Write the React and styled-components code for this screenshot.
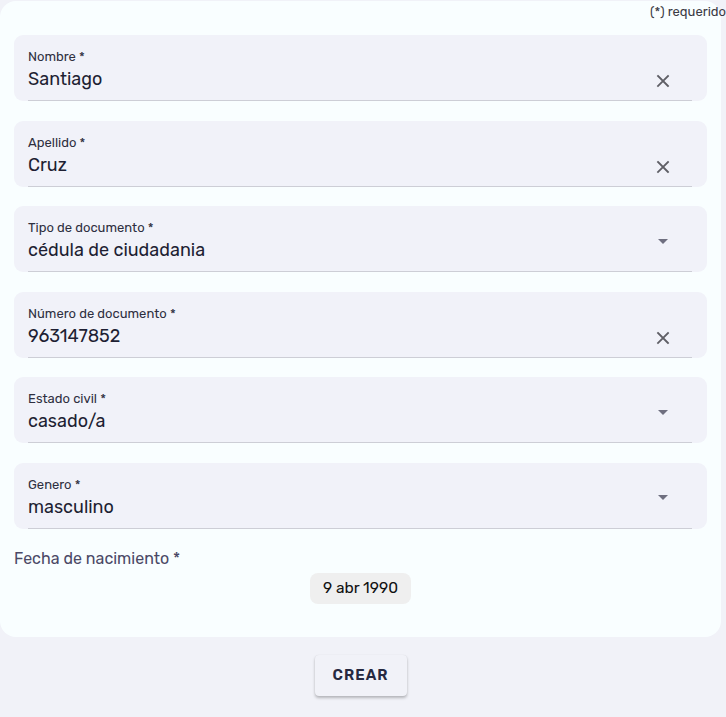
import React from 'react';
import styled, {createGlobalStyle} from 'styled-components';

const fields = [
	{label: 'Nombre *', value: 'Santiago', kind: 'clear'},
	{label: 'Apellido *', value: 'Cruz', kind: 'clear'},
	{label: 'Tipo de documento *', value: 'cédula de ciudadania', kind: 'select'},
	{label: 'Número de documento *', value: '963147852', kind: 'clear'},
	{label: 'Estado civil *', value: 'casado/a', kind: 'select'},
	{label: 'Genero *', value: 'masculino', kind: 'select'}
];

const ClearIcon = () => (
	<svg width="14" height="14" viewBox="0 0 14 14">
		<path d="M2 2 L12 12 M12 2 L2 12" stroke="#5f5f66" strokeWidth="1.8" strokeLinecap="square"/>
	</svg>
);

const CaretIcon = () => (
	<svg width="12" height="6" viewBox="0 0 12 6">
		<path d="M1 0 L11 0 L6 5 Z" fill="#6f6f80"/>
	</svg>
);

const App = () => (
	<>
		<GlobalStyle/>
		<Page>
			<Card>
				<RequiredNote>(*) requerido</RequiredNote>
				<FieldList>
					{
						fields.map(field => (
							<Field key={field.label}>
								<FieldBody>
									<FieldText>
										<Label>{field.label}</Label>
										<Value>{field.value}</Value>
									</FieldText>
									<Adornment $kind={field.kind}>
										{field.kind === 'clear' ? <ClearIcon/> : <CaretIcon/>}
									</Adornment>
								</FieldBody>
							</Field>
						))
					}
				</FieldList>
				<DateLabel>Fecha de nacimiento *</DateLabel>
				<DateRow>
					<DateChip>9 abr 1990</DateChip>
				</DateRow>
			</Card>
			<Actions>
				<CreateButton>CREAR</CreateButton>
			</Actions>
		</Page>
	</>
);

export default App;

const GlobalStyle = createGlobalStyle`
  body {
    margin: 0;
    background: #f1f2f8;
    font-family: "Rubik", Inter, "Noto Sans", sans-serif;
    color: #1e1f33;
    overflow: hidden;
  }
`;

const Page = styled.div`
  width: 726px;
  min-height: 717px;
  padding-top: 1px;
  box-sizing: border-box;
`;

const Card = styled.div`
  width: 721px;
  box-sizing: border-box;
  background: #f9feff;
  border-radius: 16px;
  padding: 0 14px 33px;
  display: flex;
  flex-direction: column;
`;

const RequiredNote = styled.div`
  height: 34px;
  margin-right: -19px;
  text-align: right;
  font-size: 13px;
  line-height: 22px;
  color: #3a3a44;
`;

const FieldList = styled.div`
  display: flex;
  flex-direction: column;
  gap: 19.6px;
`;

const Field = styled.div`
  height: 66px;
  box-sizing: border-box;
  background: #f1f2f9;
  border-radius: 9px;
  padding: 0 15px 0 14px;
  display: flex;
  flex-direction: column;
`;

const FieldBody = styled.div`
  height: 66px;
  box-sizing: border-box;
  display: flex;
  align-items: stretch;
  border-bottom: 1px solid #cdced6;
`;

const FieldText = styled.div`
  flex: 1;
  display: flex;
  flex-direction: column;
  padding-top: 13px;
`;

const Label = styled.div`
  font-size: 13px;
  line-height: 18px;
  color: #2e2f40;
`;

const Value = styled.div`
  margin-top: 1px;
  font-size: 18px;
  line-height: 24px;
  color: #1e1f33;
`;

const Adornment = styled.div`
  width: 30px;
  margin-right: 14px;
  display: flex;
  align-items: center;
  justify-content: center;
  padding-top: ${({$kind}) => ($kind === 'clear' ? '27px' : '6px')};
`;

const DateLabel = styled.div`
  margin-top: 20px;
  font-size: 16px;
  line-height: 20px;
  color: #4b4966;
`;

const DateRow = styled.div`
  display: flex;
  justify-content: center;
  margin-top: 4px;
`;

const DateChip = styled.div`
  height: 31px;
  padding: 0 13px;
  display: flex;
  align-items: center;
  background: #efefef;
  border-radius: 8px;
  font-size: 15.5px;
  color: #111;
`;

const Actions = styled.div`
  width: 721px;
  display: flex;
  justify-content: center;
  padding-top: 18px;
`;

const CreateButton = styled.button`
  width: 92px;
  height: 41px;
  border: none;
  border-radius: 4px;
  background: #f1f2f8;
  box-shadow: 0 2px 3px rgba(0, 0, 0, 0.25), 0 0 1px rgba(0, 0, 0, 0.1);
  font-family: inherit;
  font-size: 15px;
  font-weight: 600;
  letter-spacing: 1px;
  color: #262940;
`;
